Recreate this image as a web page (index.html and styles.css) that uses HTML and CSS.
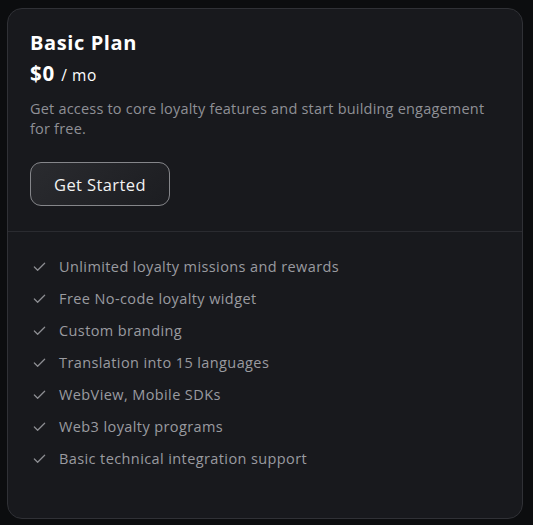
FILE: index.html
```html
<!DOCTYPE html>
<html>
<head>
<meta charset="utf-8">
<link rel="stylesheet" href="styles.css">
</head>
<body>
<div class="card">
  <div class="top">
    <h2 class="title">Basic Plan</h2>
    <div class="price"><span class="amount">$0</span> <span class="per">/ mo</span></div>
    <p class="desc">Get access to core loyalty features and start building engagement for free.</p>
    <button class="btn">Get Started</button>
  </div>
  <ul class="features">
    <li><svg class="check" viewBox="0 0 16 16"><path d="M2.5 8.5l3.5 3.5 7.5-7.5"/></svg>Unlimited loyalty missions and rewards</li>
    <li><svg class="check" viewBox="0 0 16 16"><path d="M2.5 8.5l3.5 3.5 7.5-7.5"/></svg>Free No-code loyalty widget</li>
    <li><svg class="check" viewBox="0 0 16 16"><path d="M2.5 8.5l3.5 3.5 7.5-7.5"/></svg>Custom branding</li>
    <li><svg class="check" viewBox="0 0 16 16"><path d="M2.5 8.5l3.5 3.5 7.5-7.5"/></svg>Translation into 15 languages</li>
    <li><svg class="check" viewBox="0 0 16 16"><path d="M2.5 8.5l3.5 3.5 7.5-7.5"/></svg>WebView, Mobile SDKs</li>
    <li><svg class="check" viewBox="0 0 16 16"><path d="M2.5 8.5l3.5 3.5 7.5-7.5"/></svg>Web3 loyalty programs</li>
    <li><svg class="check" viewBox="0 0 16 16"><path d="M2.5 8.5l3.5 3.5 7.5-7.5"/></svg>Basic technical integration support</li>
  </ul>
</div>
</body>
</html>
```

FILE: styles.css
```css
html, body {
  margin: 0;
  padding: 0;
  background: #0c0d0f;
}
body {
  padding: 8px 10px 6px 7px;
  font-family: "Open Sans", "Liberation Sans", sans-serif;
}
.card {
  box-sizing: border-box;
  width: 516px;
  height: 511px;
  background: #18191d;
  border: 1px solid #303136;
  border-radius: 15px;
}
.top {
  padding: 21px 23px 25px 22px;
  border-bottom: 1px solid #2a2b30;
}
.title {
  margin: 0;
  font-size: 20px;
  font-weight: 700;
  letter-spacing: 0.6px;
  color: #ffffff;
  line-height: 26px;
}
.price {
  margin-top: 4px;
  color: #fff;
  line-height: 26px;
}
.amount {
  font-size: 20.5px;
  font-weight: 700;
  letter-spacing: 0.8px;
}
.per {
  font-size: 15.5px;
  letter-spacing: 0.6px;
  margin-left: 2px;
}
.desc {
  margin: 11px 0 0;
  font-size: 14.5px;
  line-height: 20px;
  letter-spacing: 0.2px;
  color: #8f9096;
}
.btn {
  display: block;
  box-sizing: border-box;
  margin-top: 23px;
  width: 140px;
  height: 44px;
  border: 1px solid #85868a;
  border-radius: 11px;
  background: linear-gradient(135deg, #2a2b2f, #1c1d21);
  color: #f2f2f2;
  font-family: inherit;
  font-size: 16.5px;
  letter-spacing: 0.4px;
  padding: 0;
}
.features {
  list-style: none;
  margin: 0;
  padding: 18px 22px 0 24px;
}
.features li {
  display: flex;
  align-items: center;
  gap: 12px;
  height: 32px;
  font-size: 14.5px;
  letter-spacing: 0.4px;
  color: #9a9ba0;
}
.check {
  width: 15px;
  height: 15px;
  flex: none;
  fill: none;
  stroke: #8d8e93;
  stroke-width: 1.3;
  stroke-linecap: round;
  stroke-linejoin: round;
}
```
